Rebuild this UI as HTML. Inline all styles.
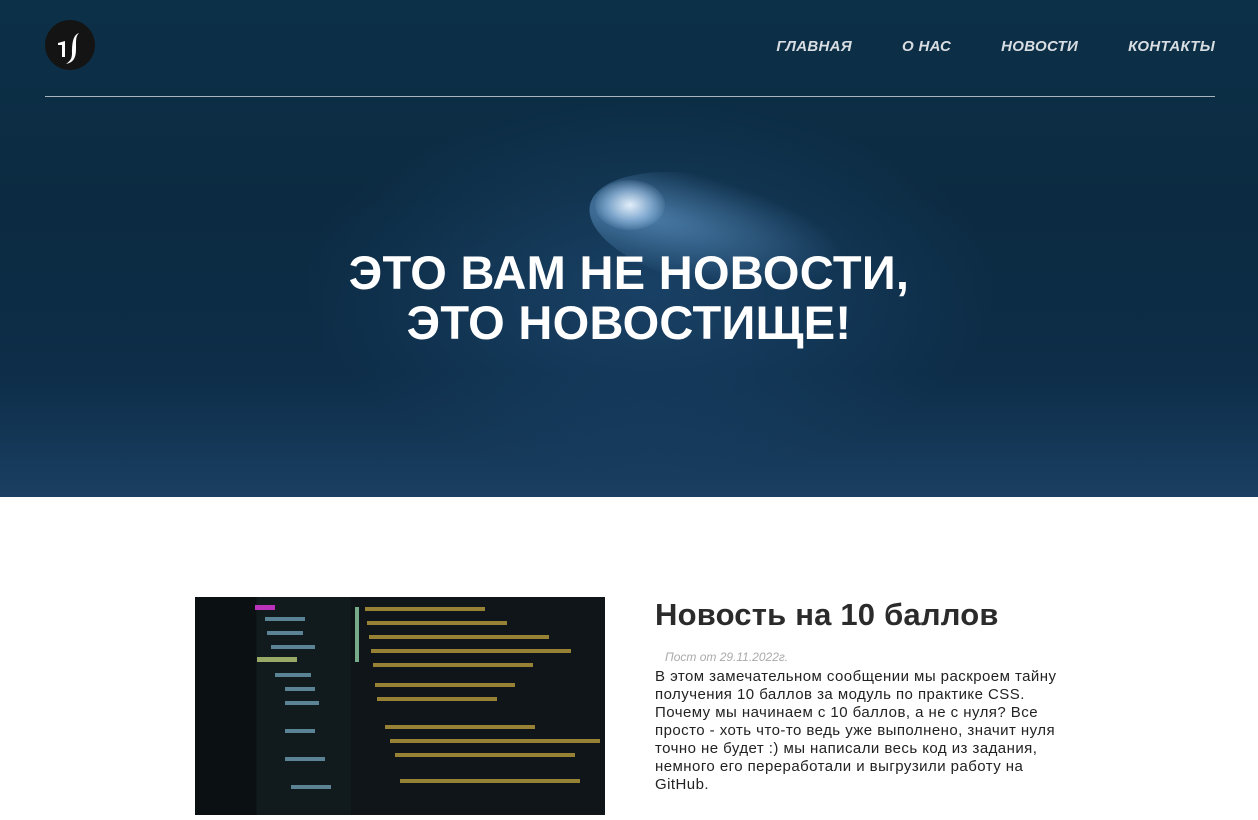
<!DOCTYPE html>
<html><head><meta charset="utf-8"><style>
*{margin:0;padding:0;box-sizing:border-box}
body{width:1258px;height:815px;overflow:hidden;background:#fff;font-family:"Liberation Sans",sans-serif}
.hero{position:relative;height:497px;overflow:hidden;background:linear-gradient(180deg,#0c3048 0%,#0c2b42 40%,#0d2d48 75%,#1a3f62 100%);}
.beam{position:absolute;left:590px;top:150px;width:260px;height:110px;border-radius:50%;transform:rotate(12deg);transform-origin:0 50%;background:radial-gradient(ellipse at 20% 50%,rgba(120,180,235,.55),rgba(60,120,190,0) 70%)}
.spot{position:absolute;left:595px;top:180px;width:70px;height:50px;border-radius:50%;background:radial-gradient(ellipse,rgba(235,245,255,.95) 0%,rgba(180,215,250,.5) 45%,rgba(120,180,240,0) 75%)}
.glow{position:absolute;left:300px;top:100px;width:700px;height:380px;border-radius:50%;background:radial-gradient(ellipse,rgba(40,90,140,.45),rgba(20,50,90,0) 70%)}
.logo{position:absolute;left:45px;top:20px;width:50px;height:50px;border-radius:50%;background:#141414}
.nav{position:absolute;right:43px;top:38px;display:flex;gap:50px}
.nav a{color:#d8dde2;font-weight:bold;font-style:italic;font-size:15px;text-decoration:none;letter-spacing:.3px}
.line{position:absolute;left:45px;right:43px;top:96px;height:1px;background:#aab4bd}
h1{position:absolute;left:0;right:0;top:248px;text-align:center;color:#fff;font-size:47px;line-height:50px;font-weight:bold;letter-spacing:.3px}
.img{position:absolute;left:195px;top:597px;width:410px;height:218px;background:
linear-gradient(90deg,#0b1113 0 15%,#111a1d 15% 38%,#0f1518 38% 100%)}
h2{position:absolute;left:655px;top:597px;font-size:31px;color:#2b2b2b;font-weight:bold;letter-spacing:.2px}
.date{position:absolute;left:665px;top:650px;font-size:12px;font-style:italic;color:#aaa}
p{position:absolute;left:655px;top:668px;width:405px;font-size:15px;line-height:18px;color:#222;letter-spacing:.45px}
</style></head><body>
<div class="hero">
<div class="glow"></div><div class="beam"></div><div class="spot"></div>
<div class="logo"><svg width="50" height="50" viewBox="0 0 50 50"><path d="M13 23 L20 21 L20 37 L17 37 L17 25 L13 25Z" fill="#fff"/><path d="M34 13 C27 15 27 27 27 33 C27 39 25 41 21 44 C31 42 31 34 31 27 C31 19 31 16 34 13Z" fill="#fff"/></svg></div>
<div class="nav"><a>ГЛАВНАЯ</a><a>О НАС</a><a>НОВОСТИ</a><a>КОНТАКТЫ</a></div>
<div class="line"></div>
<h1>ЭТО ВАМ НЕ НОВОСТИ,<br>ЭТО НОВОСТИЩЕ!</h1>
</div>
<div class="img"><svg width="410" height="218">
<rect x="60" y="8" width="20" height="5" fill="#b3b"/><rect x="62" y="60" width="40" height="5" fill="#9a6"/>
<g fill="#7ab0c8" opacity=".7">
<rect x="70" y="20" width="40" height="4"/><rect x="72" y="34" width="36" height="4"/><rect x="76" y="48" width="44" height="4"/><rect x="80" y="76" width="36" height="4"/><rect x="90" y="90" width="30" height="4"/><rect x="90" y="104" width="34" height="4"/><rect x="90" y="132" width="30" height="4"/><rect x="90" y="160" width="40" height="4"/><rect x="96" y="188" width="40" height="4"/></g>
<g fill="#d0b040" opacity=".7"><rect x="170" y="10" width="120" height="4"/><rect x="172" y="24" width="140" height="4"/><rect x="174" y="38" width="180" height="4"/><rect x="176" y="52" width="200" height="4"/><rect x="178" y="66" width="160" height="4"/><rect x="180" y="86" width="140" height="4"/><rect x="182" y="100" width="120" height="4"/><rect x="190" y="128" width="150" height="4"/><rect x="195" y="142" width="210" height="4"/><rect x="200" y="156" width="180" height="4"/><rect x="205" y="182" width="180" height="4"/></g>
<rect x="160" y="10" width="4" height="55" fill="#7a8"/></svg></div>
<h2>Новость на 10 баллов</h2>
<div class="date">Пост от 29.11.2022г.</div>
<p>В этом замечательном сообщении мы раскроем тайну получения 10 баллов за модуль по практике CSS. Почему мы начинаем с 10 баллов, а не с нуля? Все просто - хоть что-то ведь уже выполнено, значит нуля точно не будет :) мы написали весь код из задания, немного его переработали и выгрузили работу на GitHub.</p>
</body></html>
